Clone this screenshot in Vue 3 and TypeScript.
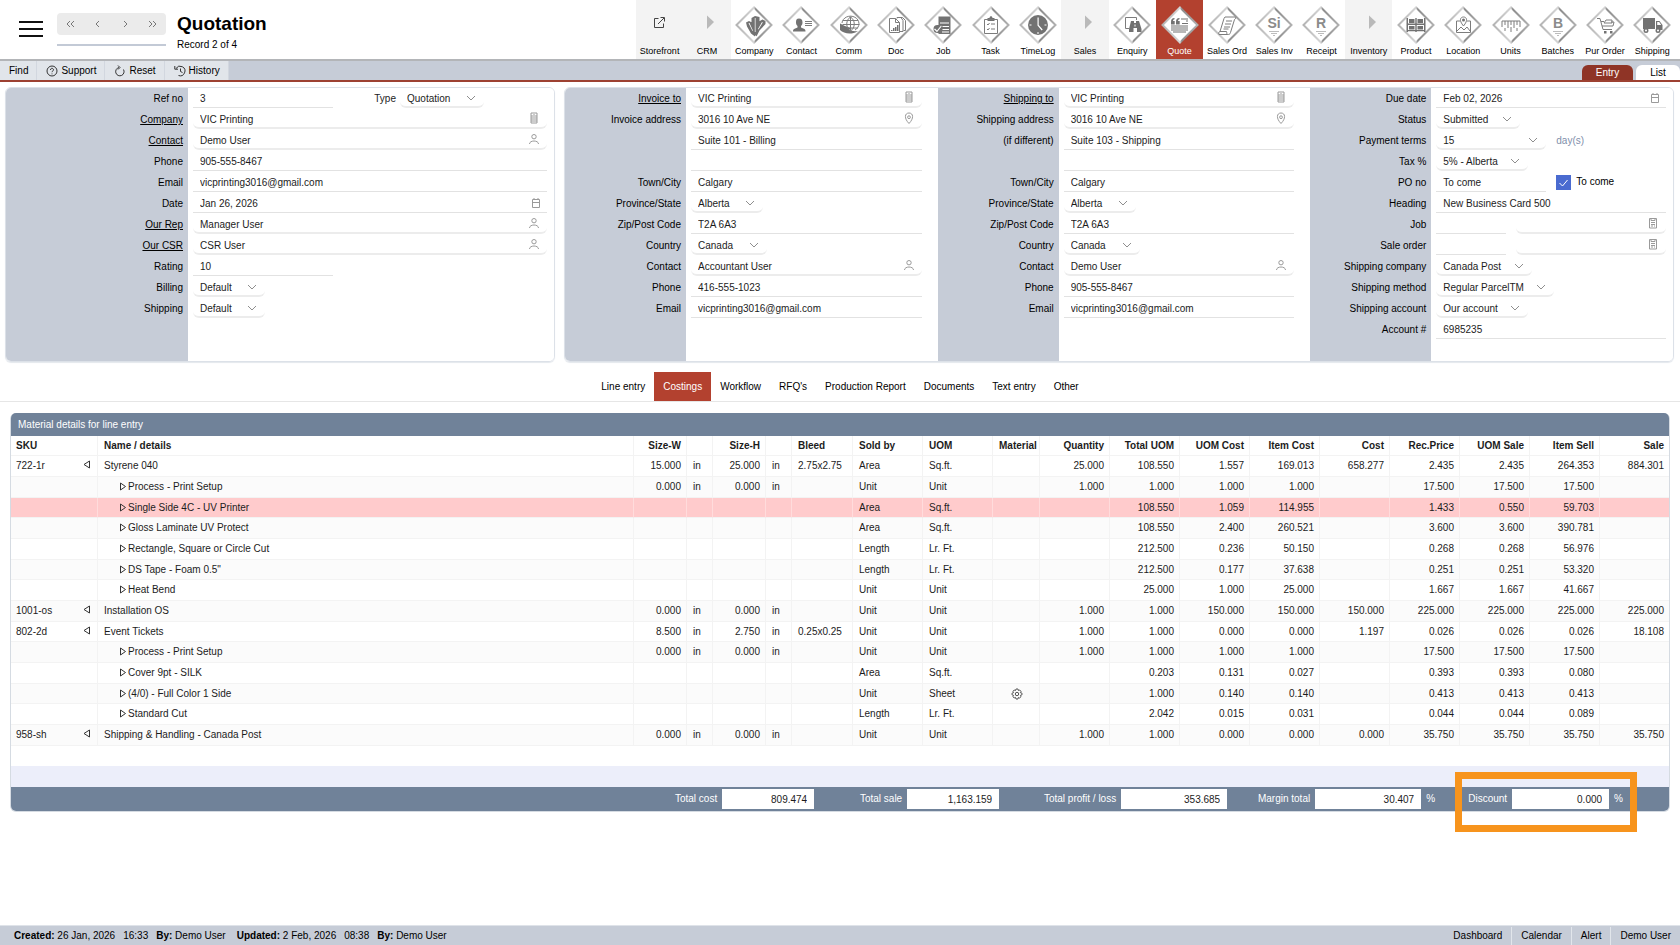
<script setup lang="ts">
interface NavItem {
  label: string
  kind: 'section' | 'external' | 'module'
  active?: boolean
  fill?: string
  line?: string
  cut?: string
  text?: string
}

interface Field {
  kind: 'text' | 'lookup' | 'select' | 'check' | 'note' | 'label'
  value: string
  size?: string
  icon?: string
}

interface Row {
  label: string
  link?: boolean
  fields: Field[]
}

interface Group {
  id: string
  rows: Row[]
}

const stripes = 'M14 25h10v1h-10zM16 27h6v1h-6zM18 29h2v1h-2z'

const navItems: NavItem[] = [
  { label: 'Storefront', kind: 'external' },
  { label: 'CRM', kind: 'section' },
  {
    label: 'Company', kind: 'module',
    fill: 'M11 16.500l3-1.500 3 1.500v4l3 7v3l-4-3-4-7zM16.500 12l3.500-2 4.500 1v8l-3 11-2-1-3-10zM24 15.500l3.500-2 3 1.500v3l-6 6.500-3 6v-7z',
    cut: 'M13.500 17l4 8 .5-.3-3.500-7.700zM19.800 12v14h.7v-14zM27 16l-4 7 .5.4 4.300-7z'
  },
  {
    label: 'Contact', kind: 'module',
    fill: 'M17 12.500c2.500 0 3.500 1.500 3.500 4 0 1.500-.5 2.500-1.500 3.500v1.500l3.500 1.500c.7.5 1 1 1 2.500H11c0-1.500.3-2 1-2.500l3.500-1.500V20c-1-1-1.500-2-1.500-3.500 0-2.500.5-4 3-4z',
    line: 'M23 15.500h7M23 17.500h7M23 19.500h7'
  },
  {
    label: 'Comm', kind: 'module',
    line: 'M12 17a8.500 7.500 0 1 1 13 7M20.500 11c-5 3-5 11 0 14M20.500 11c5 3 5 11 0 14M20.500 11v14M13 14.500h15M12.500 18.500h17M20 22h8',
    fill: 'M10 17.500v6.500c4 4 12 5 18 1-4 .5-7 0-9-1.500l3-1.500c-6-1-9-3-12-4.500z'
  },
  {
    label: 'Doc', kind: 'module',
    line: 'M12.500 12.500h6l4 4v10h-10zM18.500 12.500v4h4M20 12.500v-1h4l2 3v11h-3M24 11.500h1.500l3 3v10h-2',
    fill: 'M14 24h1.500v1h-1.500zM16 22h1.500v3h-1.500zM18 21h1.500v4h-1.500zM20 19h1.500v6h-1.500z'
  },
  {
    label: 'Job', kind: 'module',
    fill: 'M14.500 10.500h12v17.500h-12zM13.500 19a4 4 0 1 1 0 8a4 4 0 1 1 0-8z',
    cut: 'M16 16.500h9v1h-9zM18.500 20h6.500v1h-6.500zM18.500 23h6.500v1h-6.500zM18 25.500h7v1h-7zM11 22.500l2 2 4-5 .7.7-4.700 6-3-3z'
  },
  {
    label: 'Task', kind: 'module',
    line: 'M12.500 13.500h13v14H12.500zM15 18l1 1 1.500-2M15 23l1 1 1.500-2M19 18h4M19 23h4',
    fill: 'M15.500 12h2c0-2.500 3-2.500 3 0h2v3h-7z'
  },
  {
    label: 'TimeLog', kind: 'module',
    fill: 'M19 9a10 10 0 1 1 0 20a10 10 0 1 1 0-20z',
    cut: 'M18.500 11.500h1.200v7.500l4 4.500-1 1-4.200-5zM10.500 18.500h2v1h-2zM25.500 18.500h2v1h-2zM18.500 26h1v2h-1z'
  },
  { label: 'Sales', kind: 'section' },
  {
    label: 'Enquiry', kind: 'module',
    line: 'M16 22.500h-3.500v-11H23.500v2.500',
    fill: 'M18 15h3v2h2v-2h3l2.500 8v3h-4.500v-4h-3.500v4h-4.500v-3z',
    cut: 'M21.500 18.500h1v2h-1z'
  },
  {
    label: 'Quote', kind: 'module', active: true,
    fill: 'M10 16c0-2.500 1-4 3.500-4v1.200c-1 0-1.500 1-1.500 1.800h1.700v3.500H10zM15 16c0-2.500 1-4 3.500-4v1.200c-1 0-1.500 1-1.500 1.800h1.700v3.500H15zM20 12.500h7v1h-7zM25 14.500h2v1h-2zM21 17h6v1h-6zM10 19.500h17v1H10zM10 21.500h17v1H10zM10 23.500h17v1H10zM12 25.500h13v1H12z'
  },
  {
    label: 'Sales Ord', kind: 'module',
    line: 'M17 11h10c1 0 1 2-.5 2.500l-4 13c-.5 2-1.500 2-3 2H11c-1-1 0-3 1-3l4-13zM12 25.500h6.500c.5 1 0 3 1 3M18 15h6M17 18h6M16 21h6M15.500 23h5'
  },
  { label: 'Sales Inv', kind: 'module', text: 'Si', fill: stripes },
  { label: 'Receipt', kind: 'module', text: 'R', fill: stripes },
  { label: 'Inventory', kind: 'section' },
  {
    label: 'Product', kind: 'module',
    fill: 'M9.500 12h1.500v14H9.500zM27 12h1.500v14H27zM18.300 12h1.400v14h-1.400zM10 17.500h18v1.500H10zM10 24h18v1.300H10zM12 13h5.500v4H12zM20.500 13h5.500v4h-5.500zM12 20h5.500v3.500H12zM20.500 20h5.500v3.500h-5.500z'
  },
  {
    label: 'Location', kind: 'module',
    line: 'M16 15h-3.500v11.500h14V15H23M13 25l4-4 3 3 3-3 3 4M19.500 20c-5-6-3-9 0-9s5 3 0 9',
    fill: 'M19.500 12.500a1.500 1.500 0 1 1 0 3a1.500 1.500 0 1 1 0-3z'
  },
  {
    label: 'Units', kind: 'module',
    line: 'M10 21v-6h18v6M13 15v4M16 15v7M19 15v4M22 15v7M25 15v4M13 22v3M19 21v5M25 22v3'
  },
  { label: 'Batches', kind: 'module', text: 'B', fill: stripes },
  {
    label: 'Pur Order', kind: 'module',
    line: 'M11 12.500h3l3 11h9M15 15.500h3M16 20h11l1-4h-3M18 17h8v-3h-6z',
    fill: 'M18 25h2.500v2.500H18zM24 25h2.500v2.500H24z'
  },
  {
    label: 'Shipping', kind: 'module',
    fill: 'M10 12h12v11H10zM23 15h3.500l3 4v5H23zM13 22a2.500 2.500 0 1 1 0 5a2.500 2.500 0 1 1 0-5zM25 22a2.500 2.500 0 1 1 0 5a2.500 2.500 0 1 1 0-5z',
    cut: 'M24.200 16h2l2 3h-4zM13 23.600a1 1 0 1 1 0 2a1 1 0 1 1 0-2zM25 23.600a1 1 0 1 1 0 2a1 1 0 1 1 0-2z'
  }
]

const recordNav = [
  { label: 'First record', d: 'M6 2L3 5l3 3M10 2L7 5l3 3' },
  { label: 'Previous record', d: 'M8 2L5 5l3 3' },
  { label: 'Next record', d: 'M5 2l3 3-3 3' },
  { label: 'Last record', d: 'M3 2l3 3-3 3M7 2l3 3-3 3' }
]

const fieldIcons: Record<string, string> = {
  building: 'M3 1h6v10H3zM5 3h2M5 5h2M5 7h2M5 9h2M4 3v7M8 3v7',
  person: 'M6 1.500a2.200 2.200 0 1 1 0 4.400a2.200 2.200 0 1 1 0-4.400zM1.500 11c0-4 9-4 9 0',
  calendar: 'M4.500 2.500h7v8h-7zM4.500 5.500h7M6 1v2M10 1v2',
  pin: 'M6 11.500C1 6.500 1.500 1 6 1s5 5.500 0 10.500zM6 3.800a1.400 1.400 0 1 1 0 2.800a1.400 1.400 0 1 1 0-2.800z',
  job: 'M2.500 1.500h7v9.500h-7zM4 1.500v2h4v-2M4 5.500h4M4 7.500h4M4 9h2M7 9h1'
}

const text = (value: string, size = 'fill'): Field[] => [{ kind: 'text', value, size }]
const date = (value: string): Field[] => [{ kind: 'text', value, size: 'fill', icon: 'calendar' }]
const lookup = (value: string, icon: string): Field[] => [{ kind: 'lookup', value, size: 'fill', icon }]
const select = (value: string, size: string): Field[] => [{ kind: 'select', value, size }]

const customer: Group = {
  id: 'customer',
  rows: [
    {
      label: 'Ref no',
      fields: [...text('3', 'ref'), { kind: 'label', value: 'Type' }, ...select('Quotation', 's84')]
    },
    { label: 'Company', link: true, fields: lookup('VIC Printing', 'building') },
    { label: 'Contact', link: true, fields: lookup('Demo User', 'person') },
    { label: 'Phone', fields: text('905-555-8467') },
    { label: 'Email', fields: text('vicprinting3016@gmail.com') },
    { label: 'Date', fields: date('Jan 26, 2026') },
    { label: 'Our Rep', link: true, fields: lookup('Manager User', 'person') },
    { label: 'Our CSR', link: true, fields: lookup('CSR User', 'person') },
    { label: 'Rating', fields: text('10', 'ref') },
    { label: 'Billing', fields: select('Default', 's72') },
    { label: 'Shipping', fields: select('Default', 's72') }
  ]
}

const addressRows = (first: string, second: string, third: string, suite: string, person: string, phone: string): Row[] => [
  { label: first, link: true, fields: lookup('VIC Printing', 'building') },
  { label: second, fields: lookup('3016 10 Ave NE', 'pin') },
  { label: third, fields: text(suite) },
  { label: '', fields: text('') },
  { label: 'Town/City', fields: text('Calgary') },
  { label: 'Province/State', fields: select('Alberta', 's72') },
  { label: 'Zip/Post Code', fields: text('T2A 6A3') },
  { label: 'Country', fields: select('Canada', 's76') },
  { label: 'Contact', fields: lookup(person, 'person') },
  { label: 'Phone', fields: text(phone) },
  { label: 'Email', fields: text('vicprinting3016@gmail.com') }
]

const groups: Group[] = [
  {
    id: 'invoice',
    rows: addressRows('Invoice to', 'Invoice address', '', 'Suite 101 - Billing', 'Accountant User', '416-555-1023')
  },
  {
    id: 'delivery',
    rows: addressRows('Shipping to', 'Shipping address', '(if different)', 'Suite 103 - Shipping', 'Demo User', '905-555-8467')
  },
  {
    id: 'terms',
    rows: [
      { label: 'Due date', fields: date('Feb 02, 2026') },
      { label: 'Status', fields: select('Submitted', 's84') },
      { label: 'Payment terms', fields: [...select('15', 's110'), { kind: 'note', value: 'day(s)' }] },
      { label: 'Tax %', fields: select('5% - Alberta', 's92') },
      { label: 'PO no', fields: [...text('To come', 's110'), { kind: 'check', value: 'To come' }] },
      { label: 'Heading', fields: text('New Business Card 500') },
      { label: 'Job', fields: [...text('', 's70'), ...lookup('', 'job')] },
      { label: 'Sale order', fields: [...text('', 's70'), ...lookup('', 'job')] },
      { label: 'Shipping company', fields: select('Canada Post', 's96') },
      { label: 'Shipping method', fields: select('Regular ParcelTM', 's118') },
      { label: 'Shipping account', fields: select('Our account', 's92') },
      { label: 'Account #', fields: text('6985235') }
    ]
  }
]

const panels = [
  { id: 'main', groups: [customer] },
  { id: 'wide', groups }
]

const tabs = ['Line entry', 'Costings', 'Workflow', "RFQ's", 'Production Report', 'Documents', 'Text entry', 'Other']

const columns = [
  { title: 'SKU', cls: 'c-sku' },
  { title: 'Name / details', cls: 'c-name' },
  { title: 'Size-W', cls: 'c-size num' },
  { title: '', cls: 'c-unit' },
  { title: 'Size-H', cls: 'c-size num' },
  { title: '', cls: 'c-unit' },
  { title: 'Bleed', cls: 'c-bleed' },
  { title: 'Sold by', cls: 'c-std' },
  { title: 'UOM', cls: 'c-std' },
  { title: 'Material', cls: 'c-mat' },
  { title: 'Quantity', cls: 'c-std num' },
  { title: 'Total UOM', cls: 'c-std num' },
  { title: 'UOM Cost', cls: 'c-std num' },
  { title: 'Item Cost', cls: 'c-std num' },
  { title: 'Cost', cls: 'c-std num' },
  { title: 'Rec.Price', cls: 'c-std num' },
  { title: 'UOM Sale', cls: 'c-std num' },
  { title: 'Item Sell', cls: 'c-std num' },
  { title: 'Sale', cls: 'c-last num' }
]

const lines: string[][] = [
  ['722-1r', 'Styrene 040', '15.000', 'in', '25.000', 'in', '2.75x2.75', 'Area', 'Sq.ft.', '', '25.000', '108.550', '1.557', '169.013', '658.277', '2.435', '2.435', '264.353', '884.301'],
  ['', 'Process - Print Setup', '0.000', 'in', '0.000', 'in', '', 'Unit', 'Unit', '', '1.000', '1.000', '1.000', '1.000', '', '17.500', '17.500', '17.500', ''],
  ['', 'Single Side 4C - UV Printer', '', '', '', '', '', 'Area', 'Sq.ft.', '', '', '108.550', '1.059', '114.955', '', '1.433', '0.550', '59.703', ''],
  ['', 'Gloss Laminate UV Protect', '', '', '', '', '', 'Area', 'Sq.ft.', '', '', '108.550', '2.400', '260.521', '', '3.600', '3.600', '390.781', ''],
  ['', 'Rectangle, Square or Circle Cut', '', '', '', '', '', 'Length', 'Lr. Ft.', '', '', '212.500', '0.236', '50.150', '', '0.268', '0.268', '56.976', ''],
  ['', 'DS Tape - Foam 0.5"', '', '', '', '', '', 'Length', 'Lr. Ft.', '', '', '212.500', '0.177', '37.638', '', '0.251', '0.251', '53.320', ''],
  ['', 'Heat Bend', '', '', '', '', '', 'Unit', 'Unit', '', '', '25.000', '1.000', '25.000', '', '1.667', '1.667', '41.667', ''],
  ['1001-os', 'Installation OS', '0.000', 'in', '0.000', 'in', '', 'Unit', 'Unit', '', '1.000', '1.000', '150.000', '150.000', '150.000', '225.000', '225.000', '225.000', '225.000'],
  ['802-2d', 'Event Tickets', '8.500', 'in', '2.750', 'in', '0.25x0.25', 'Unit', 'Unit', '', '1.000', '1.000', '0.000', '0.000', '1.197', '0.026', '0.026', '0.026', '18.108'],
  ['', 'Process - Print Setup', '0.000', 'in', '0.000', 'in', '', 'Unit', 'Unit', '', '1.000', '1.000', '1.000', '1.000', '', '17.500', '17.500', '17.500', ''],
  ['', 'Cover 9pt - SILK', '', '', '', '', '', 'Area', 'Sq.ft.', '', '', '0.203', '0.131', '0.027', '', '0.393', '0.393', '0.080', ''],
  ['', '(4/0) - Full Color 1 Side', '', '', '', '', '', 'Unit', 'Sheet', 'gear', '', '1.000', '0.140', '0.140', '', '0.413', '0.413', '0.413', ''],
  ['', 'Standard Cut', '', '', '', '', '', 'Length', 'Lr. Ft.', '', '', '2.042', '0.015', '0.031', '', '0.044', '0.044', '0.089', ''],
  ['958-sh', 'Shipping & Handling - Canada Post', '0.000', 'in', '0.000', 'in', '', 'Unit', 'Unit', '', '1.000', '1.000', '0.000', '0.000', '0.000', '35.750', '35.750', '35.750', '35.750']
]
const warningLine = 2

const totals = [
  { id: 'cost', label: 'Total cost', value: '809.474', unit: '' },
  { id: 'sale', label: 'Total sale', value: '1,163.159', unit: '' },
  { id: 'profit', label: 'Total profit / loss', value: '353.685', unit: '' },
  { id: 'margin', label: 'Margin total', value: '30.407', unit: '%' },
  { id: 'discount', label: 'Discount', value: '0.000', unit: '%' }
]

const fieldId = (group: string, row: number, index: number) => `${group}-${row}-${index}`
</script>

<template>
  <div class="page">
    <header class="top">
      <button class="menu" type="button" aria-label="Menu">
        <svg width="26" height="18" viewBox="0 0 26 18"><path d="M1 2h24M1 9h24M1 16h24" /></svg>
      </button>
      <div class="record">
        <div class="record-nav">
          <button v-for="n in recordNav" :key="n.label" type="button" :aria-label="n.label">
            <svg width="13" height="10" viewBox="0 0 13 10"><path :d="n.d" /></svg>
          </button>
        </div>
      </div>
      <div class="heading">
        <h1>Quotation</h1>
        <p>Record 2 of 4</p>
      </div>
      <nav class="modules">
        <a v-for="item in navItems" :key="item.label" href="#" :class="['module', item.kind, { active: item.active }]">
          <svg v-if="item.kind === 'external'" width="38" height="38" viewBox="0 0 38 38">
            <path class="open" d="M17.500 12.500h-4v9h9v-4M17 18l6-6M19.500 11.500h4v4" />
          </svg>
          <svg v-else-if="item.kind === 'section'" width="38" height="38" viewBox="0 0 38 38">
            <path class="arrow" d="M19 9.500l7 6.500-7 7z" />
          </svg>
          <svg v-else width="38" height="38" viewBox="0 0 38 38">
            <defs>
              <linearGradient id="edge" x1="0" y1="0" x2="1" y2="0">
                <stop offset="0" stop-color="#b4b4b4" />
                <stop offset="0.5" stop-color="#d6d6d6" />
                <stop offset="0.55" stop-color="#8c8c8c" />
                <stop offset="1" stop-color="#b0b0b0" />
              </linearGradient>
            </defs>
            <path class="diamond" d="M19 1.500L36.500 19 19 36.500 1.500 19z" stroke="url(#edge)" />
            <path v-if="item.fill" :class="item.text ? 'pale' : 'solid'" :d="item.fill" />
            <path v-if="item.line" class="line" :d="item.line" />
            <path v-if="item.cut" class="cut" :d="item.cut" />
            <text v-if="item.text" x="19" y="22" text-anchor="middle">{{ item.text }}</text>
          </svg>
          <span>{{ item.label }}</span>
        </a>
      </nav>
    </header>

    <div class="toolbar">
      <button type="button">Find</button>
      <button type="button">
        <svg width="12" height="12" viewBox="0 0 12 12"><circle cx="6" cy="6" r="5" /><path d="M4.500 5c0-2.500 3.200-2 3 0C7.400 6 6 6 6 7.200M6 8.500v.8" /></svg>
        Support
      </button>
      <button type="button">
        <svg width="12" height="12" viewBox="0 0 12 12"><path d="M5 2.500a4.200 4.200 0 1 0 4.500 2M4 .5l2 2-2 2" /></svg>
        Reset
      </button>
      <button type="button">
        <svg width="12" height="12" viewBox="0 0 12 12"><path d="M2 3.500A4.800 4.800 0 1 1 4.500 10.500M.8 1v3.200H4M6.500 3.500v3l2 1" /></svg>
        History
      </button>
      <nav class="views">
        <a href="#" class="view current">Entry</a>
        <a href="#" class="view">List</a>
      </nav>
    </div>

    <main>
      <form class="panels" @submit.prevent>
        <section v-for="p in panels" :key="p.id" :class="['panel', p.id]">
          <div v-for="g in p.groups" :key="g.id" :class="['group', g.id]">
            <div v-for="(row, r) in g.rows" :key="r" class="row">
              <a v-if="row.link" href="#" class="caption" :id="`${g.id}-label-${r}`">{{ row.label }}</a>
              <label v-else class="caption" :for="fieldId(g.id, r, 0)" :id="`${g.id}-label-${r}`">{{ row.label }}</label>
              <div class="fields">
                <template v-for="(f, i) in row.fields" :key="i">
                  <label v-if="f.kind === 'label'" class="inner" :for="fieldId(g.id, r, i + 1)">{{ f.value }}</label>
                  <span v-else-if="f.kind === 'note'" class="note">{{ f.value }}</span>
                  <label v-else-if="f.kind === 'check'" class="check">
                    <input type="checkbox" checked />
                    <svg width="15" height="15" viewBox="0 0 15 15"><path d="M3.500 8l3 3 5-6" /></svg>
                    {{ f.value }}
                  </label>
                  <span v-else :class="['box', f.kind, f.size]">
                    <select v-if="f.kind === 'select'" :id="fieldId(g.id, r, i)">
                      <option>{{ f.value }}</option>
                    </select>
                    <input v-else :id="fieldId(g.id, r, i)" type="text" :value="f.value" :aria-labelledby="`${g.id}-label-${r}`" />
                    <svg v-if="f.kind === 'select'" class="chevron" width="10" height="8" viewBox="0 0 10 8"><path d="M1 2l4 4 4-4" /></svg>
                    <svg v-else-if="f.icon" class="glyph" width="12" height="12" viewBox="0 0 12 12"><path :d="fieldIcons[f.icon]" /></svg>
                  </span>
                </template>
              </div>
            </div>
          </div>
        </section>
      </form>

      <nav class="tabs">
        <a v-for="t in tabs" :key="t" href="#" :class="{ current: t === 'Costings' }">{{ t }}</a>
      </nav>

      <section class="grid">
        <h2>Material details for line entry</h2>
        <table>
          <thead>
            <tr>
              <th v-for="(c, i) in columns" :key="i" :class="c.cls" scope="col">{{ c.title }}</th>
            </tr>
          </thead>
          <tbody>
            <tr v-for="(line, l) in lines" :key="l" :class="{ warning: l === warningLine }">
              <td v-for="(cell, i) in line" :key="i" :class="[columns[i].cls, { child: i === 1 && !line[0] }]">
                <svg v-if="i === 1 && !line[0]" class="tri" width="8" height="9" viewBox="0 0 8 9"><path d="M1.500 1l5 3.500-5 3.500z" /></svg>
                <svg v-if="cell === 'gear'" class="gear" width="12" height="12" viewBox="0 0 12 12">
                  <circle cx="6" cy="6" r="1.700" />
                  <path d="M5 1h2l.4 1.500 1.300-.5 1.300 1.400-.7 1.200L11 5.200v1.600l-1.600.6.6 1.300L8.600 10l-1.200-.6L7 11H5l-.5-1.600-1.300.6L2 8.700l.6-1.300L1 6.800V5.200l1.600-.6L2 3.400 3.200 2l1.300.5z" />
                </svg>
                <template v-else>{{ cell }}</template>
                <svg v-if="i === 0 && cell" class="tri back" width="8" height="9" viewBox="0 0 8 9"><path d="M6.500 1l-5.500 3.500 5.500 3.500z" /></svg>
              </td>
            </tr>
          </tbody>
        </table>
        <div class="spare"></div>
        <div class="totals">
          <div v-for="t in totals" :key="t.id" :class="['total', t.id]">
            <label :for="`total-${t.id}`">{{ t.label }}</label>
            <input :id="`total-${t.id}`" type="text" :value="t.value" />
            <span v-if="t.unit">{{ t.unit }}</span>
            <i v-if="t.id === 'discount'" class="marker"></i>
          </div>
        </div>
      </section>
    </main>

    <footer class="status">
      <p>
        <span><b>Created:</b> 26 Jan, 2026</span>
        <span>16:33</span>
        <span><b>By:</b> Demo User</span>
      </p>
      <p>
        <span><b>Updated:</b> 2 Feb, 2026</span>
        <span>08:38</span>
        <span><b>By:</b> Demo User</span>
      </p>
      <nav>
        <a href="#">Dashboard</a>
        <a href="#">Calendar</a>
        <a href="#">Alert</a>
        <a href="#">Demo User</a>
      </nav>
    </footer>
  </div>
</template>

<style>
body {
  margin: 0;
  background: #fff;
}
</style>

<style scoped>
.page,
.page * {
  box-sizing: border-box;
}
.page {
  display: flex;
  flex-direction: column;
  min-height: 100vh;
  font-family: "Liberation Sans", Arial, sans-serif;
  font-size: 10px;
  line-height: 12px;
  color: #000;
}
button,
input,
select {
  font: inherit;
  color: inherit;
  margin: 0;
  padding: 0;
  border: 0;
  background: none;
  border-radius: 0;
}
a {
  color: inherit;
  text-decoration: none;
}
h1,
h2,
p {
  margin: 0;
}
svg {
  display: block;
  flex: none;
  fill: none;
}

.top {
  display: flex;
  height: 61px;
  padding-left: 18px;
  border-bottom: 2px solid #b3b5b8;
}
.menu {
  align-self: flex-start;
  margin-top: 20px;
}
.menu path {
  stroke: #111;
  stroke-width: 2;
}
.record {
  width: 109px;
  height: 33px;
  margin: 13px 11px 0 13px;
  border-bottom: 2px solid #c3cad6;
}
.record-nav {
  display: grid;
  grid-template-columns: repeat(4, 1fr);
  height: 22px;
  background: #ebebeb;
  border-radius: 4px;
}
.record-nav button {
  display: grid;
  place-items: center;
}
.record-nav path {
  stroke: #777;
}
.heading {
  padding-top: 13px;
}
.heading h1 {
  font-size: 19px;
  line-height: 22px;
}
.heading p {
  margin-top: 4px;
}
.modules {
  display: grid;
  grid-template-columns: repeat(22, 1fr);
  flex: 0 1 1040px;
  margin: 0 4px 0 auto;
}
.module {
  display: flex;
  flex-direction: column;
  align-items: center;
  padding-top: 6px;
  font-size: 9px;
  line-height: 14px;
  white-space: nowrap;
}
.module.external,
.module.section {
  background: #f3f3f3;
}
.module.active {
  background: #b3412f;
  color: #fff;
}
.module .diamond {
  fill: #fff;
  stroke-width: 2;
}
.module .solid {
  fill: #727272;
}
.module .pale {
  fill: #bdbdbd;
}
.module .line {
  stroke: #7c7c7c;
}
.module .cut {
  fill: #fff;
}
.module .arrow {
  fill: #b9b9b9;
}
.module .open {
  stroke: #444;
}
.module text {
  font-size: 14px;
  font-weight: bold;
  fill: #8b8b8b;
}

.toolbar {
  display: flex;
  height: 21px;
  background: #c6ccd7;
  border-bottom: 2px solid #9d4132;
}
.toolbar button {
  display: flex;
  align-items: center;
  gap: 3px;
  padding: 0 8px 0 9px;
  background: #e1e5ea;
  border-right: 1px solid #d2d7df;
}
.toolbar svg {
  stroke: #333;
}
.views {
  display: flex;
  align-items: flex-end;
  gap: 3px;
  margin-left: auto;
}
.view {
  width: 44px;
  height: 15px;
  line-height: 15px;
  text-align: center;
  background: #fff;
  border-radius: 6px 6px 0 0;
}
.view.current {
  width: 51px;
  background: #8f3426;
  color: #fff;
}

.panels {
  display: grid;
  grid-template-columns: 550fr 1110fr;
  gap: 9px;
  padding: 5px 6px 0 5px;
}
.panel {
  display: grid;
  border: 1px solid #dce1e8;
  border-radius: 6px;
  overflow: hidden;
  box-shadow: 0 1px 1px #e4e8ed;
}
.panel.wide {
  grid-template-columns: 373fr 373fr 363fr;
}
.group {
  --caption: 121px;
  --end: 16px;
  min-height: 273px;
  background: linear-gradient(to right, #c6ccd7 var(--caption), #fff var(--caption));
}
.group.customer {
  --caption: 182px;
  --end: 7px;
}
.group.terms {
  --end: 7px;
}
.row {
  display: grid;
  grid-template-columns: var(--caption) 1fr;
  height: 21px;
}
.caption {
  padding: 5px 5px 0 0;
  text-align: right;
}
a.caption {
  text-decoration: underline;
}
.fields {
  display: flex;
  gap: 10px;
  min-width: 0;
  padding: 0 var(--end) 0 5px;
  color: #1c1c1c;
}
.box {
  position: relative;
  display: flex;
  align-items: center;
  height: 20px;
  border-bottom: 1px solid #e2e2e2;
}
.box.lookup,
.box.select {
  border-bottom-width: 2px;
  border-color: #ececec;
  border-radius: 0 0 6px 6px;
}
.box input,
.box select {
  width: 100%;
  min-width: 0;
  height: 18px;
  padding: 2px 0 0 7px;
  outline: none;
}
.box select {
  appearance: none;
  padding-top: 3px;
}
.fill {
  flex: 1;
}
.ref {
  width: 140px;
}
.s70 {
  width: 70px;
}
.s72 {
  width: 72px;
}
.s76 {
  width: 76px;
}
.s84 {
  width: 84px;
}
.s92 {
  width: 92px;
}
.s96 {
  width: 96px;
}
.s110 {
  width: 110px;
}
.s118 {
  width: 118px;
}
.chevron {
  position: absolute;
  top: 6px;
  right: 8px;
  stroke: #8e8e8e;
  pointer-events: none;
}
.glyph {
  margin-right: 7px;
  stroke: #9a9a9a;
}
.inner {
  width: 53px;
  padding-top: 5px;
  text-align: right;
  margin-right: -6px;
}
.note {
  padding-top: 5px;
  color: #7f8fab;
}
.check {
  position: relative;
  display: flex;
  align-items: center;
  gap: 5px;
  height: 20px;
  color: #000;
}
.check input {
  appearance: none;
  width: 15px;
  height: 15px;
  background: #4a6bd0;
}
.check svg {
  position: absolute;
  left: 0;
  stroke: #fff;
  pointer-events: none;
}

.tabs {
  display: flex;
  justify-content: center;
  height: 40px;
  padding-top: 10px;
  border-bottom: 1px solid #e6e6e6;
}
.tabs a {
  padding: 0 9px;
  line-height: 29px;
}
.tabs .current {
  background: #b3412f;
  color: #fff;
}

.grid {
  margin: 11px 10px 0;
  border: 1px solid #d5dbe2;
  border-top: 0;
  border-radius: 6px;
}
.grid h2 {
  padding-left: 7px;
  font-size: 10px;
  font-weight: normal;
  line-height: 23px;
  color: #fff;
  background: #708299;
  border-radius: 5px 5px 0 0;
}
table {
  width: 100%;
  table-layout: fixed;
  border-collapse: separate;
  border-spacing: 0;
}
th,
td {
  height: 21px;
  padding: 0 5px 0 6px;
  text-align: left;
  white-space: nowrap;
  color: #1c1c1c;
  border-right: 1px solid #f3f3f3;
  border-bottom: 1px solid #f3f3f3;
}
th {
  height: 20px;
}
tbody tr:nth-child(3n) td {
  height: 20px;
}
tbody tr:nth-child(even) {
  background: #fbfbfb;
}
tbody tr.warning {
  background: #ffcbcc;
}
tr.warning td {
  border-right-color: #ffdcdc;
}
th:last-child,
td:last-child {
  border-right: 0;
}
.num {
  text-align: right;
}
.c-sku {
  width: 87px;
  padding-left: 5px;
}
.c-size {
  width: 53px;
}
.c-unit {
  width: 26px;
}
.c-bleed {
  width: 61px;
}
.c-std {
  width: 70px;
}
.c-last {
  width: 69px;
}
.c-mat {
  width: 47px;
}
td.child {
  padding-left: 21px;
}
.tri {
  display: inline-block;
  margin-right: 1px;
  vertical-align: -1px;
  stroke: #333;
}
.tri.back {
  float: right;
}
.gear {
  margin: 0 auto;
  stroke: #555;
}
.spare {
  height: 41px;
  background: linear-gradient(#fff 20px, #eceefa 20px);
}
.totals {
  display: flex;
  justify-content: flex-end;
  align-items: center;
  height: 24px;
  padding-right: 46px;
  color: #fff;
  background: #708299;
  border-radius: 0 0 5px 5px;
}
.total {
  position: relative;
  display: flex;
  align-items: center;
  gap: 5px;
}
.total label {
  text-align: right;
}
.total input {
  width: 92px;
  height: 20px;
  padding-right: 7px;
  text-align: right;
  color: #1c1c1c;
  background: #fff;
}
.total.sale label {
  width: 88px;
}
.total.profit label {
  width: 117px;
}
.total.profit input,
.total.margin input {
  width: 106px;
}
.total.margin label {
  width: 83px;
}
.total.discount label {
  width: 72px;
}
.total.discount input {
  width: 97px;
}
.marker {
  position: absolute;
  inset: -17px -14px -23px 20px;
  border: 7px solid #f7941d;
  pointer-events: none;
}

.status {
  display: flex;
  align-items: center;
  gap: 11px;
  height: 20px;
  margin-top: auto;
  padding: 1px 0 0 14px;
  background: #c6ccd7;
  border-top: 1px solid #dfe3e9;
}
.status p {
  display: flex;
  gap: 8px;
}
.status nav {
  display: flex;
  margin-left: auto;
}
.status nav a {
  padding: 0 9px;
  line-height: 18px;
  border-left: 1px solid #e2e6eb;
}
.status nav a:first-child {
  border-left: 0;
}
</style>
